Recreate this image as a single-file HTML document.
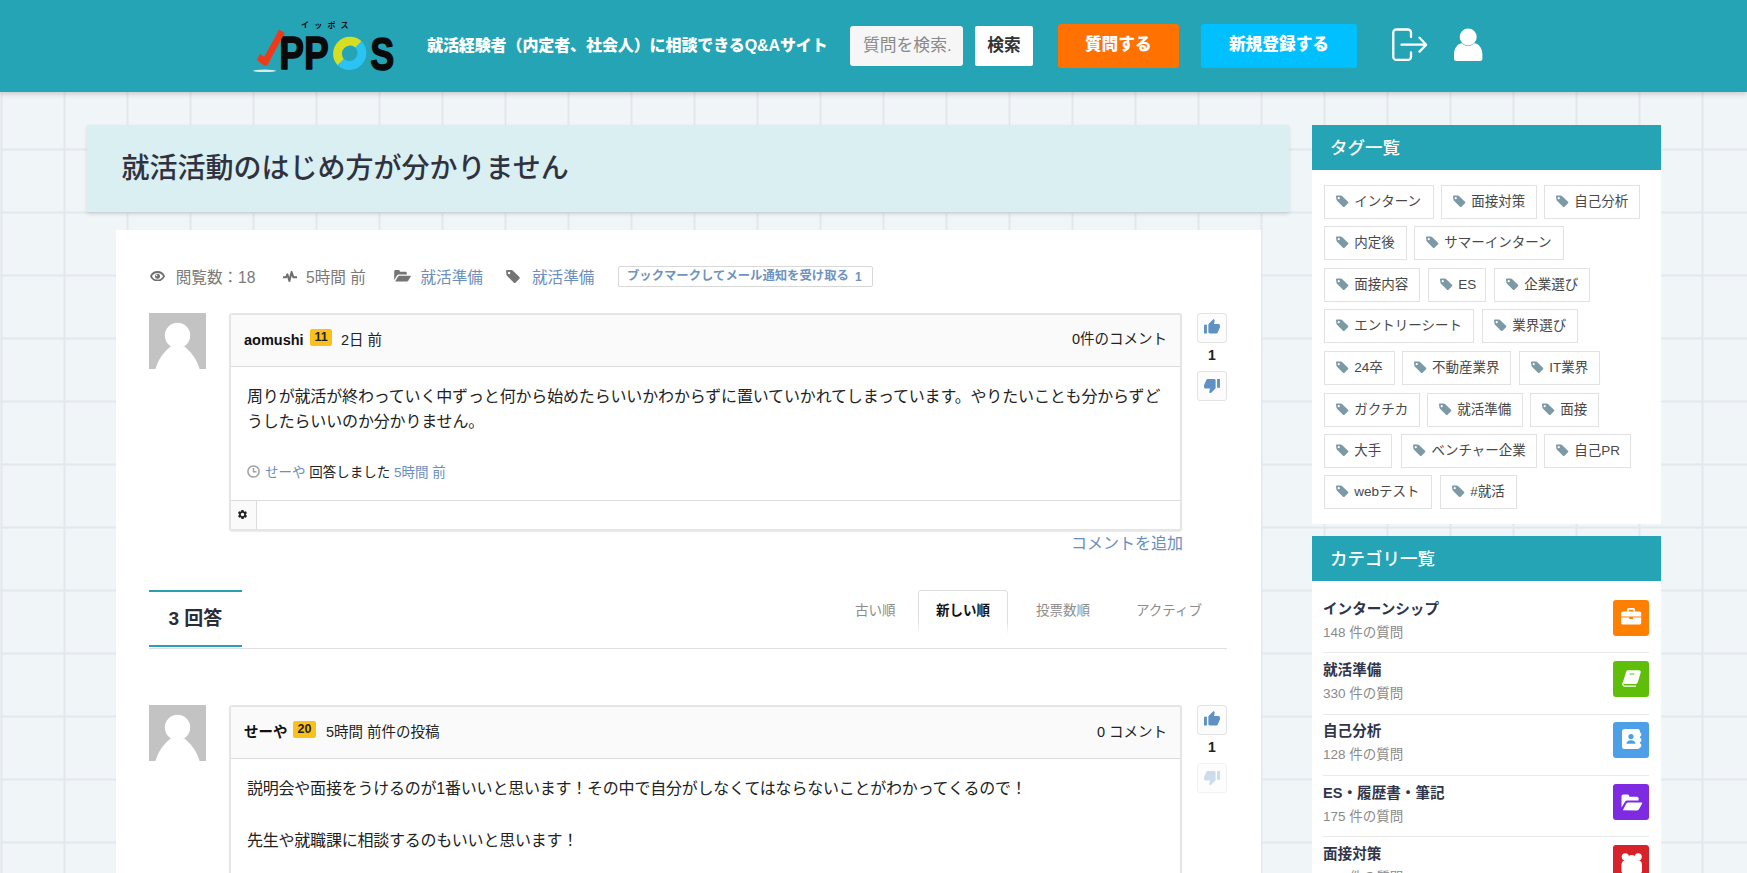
<!DOCTYPE html>
<html lang="ja">
<head>
<meta charset="utf-8">
<title>就活活動のはじめ方が分かりません - IPPOS</title>
<style>
*{box-sizing:border-box;margin:0;padding:0}
html,body{width:1747px;height:873px;overflow:hidden}
body{font-family:"Liberation Sans","Noto Sans CJK JP",sans-serif;color:#222;background-color:#f0f5f8;
 background-image:linear-gradient(90deg,rgba(226,231,236,0) 0,#e3e8ed 1px,#e3e8ed 2px,rgba(226,231,236,0) 3px),linear-gradient(180deg,rgba(226,231,236,0) 0,#e3e8ed 1px,#e3e8ed 2px,rgba(226,231,236,0) 3px);
 background-size:63px 63px;background-position:0 22px;position:relative}
.abs{position:absolute}
a{text-decoration:none;color:inherit}
#hdr{position:absolute;left:0;top:0;width:1747px;height:92px;background:#25a4b5;box-shadow:0 2px 5px rgba(0,0,0,.18)}
.t{position:absolute;white-space:nowrap;line-height:1}
#tagline{left:427px;top:37.5px;font-size:16px;font-weight:900;color:#fff;letter-spacing:-.1px}
#sinput{left:850px;top:26px;width:113px;height:40px;background:#f6f6f6;border-radius:3px;color:#8a8a8a;font-size:16.8px;padding:7.4px 0 0 13px;line-height:1;white-space:nowrap;overflow:hidden}
#sbtn{left:975px;top:26px;width:58px;height:40px;background:#fff;border-radius:2px;color:#333;font-size:16.7px;font-weight:700;text-align:center;line-height:40px}
#ask{left:1058px;top:24px;width:120.5px;height:44px;background:#ff7101;border-radius:3px;color:#fff;font-size:16.7px;font-weight:900;text-align:center;line-height:42.4px}
#reg{left:1201px;top:24px;width:156px;height:44px;background:#00c0ff;border-radius:3px;color:#fff;font-size:16.7px;font-weight:900;text-align:center;line-height:42.4px}
#title{left:87px;top:125px;width:1202px;height:87px;background:#d9eff2;box-shadow:0 2px 4px rgba(0,0,0,.12)}
#title h1{position:absolute;left:34.6px;top:29.8px;font-size:28px;font-weight:500;color:#30333f;line-height:1;white-space:nowrap}
#main{left:116px;top:230px;width:1145px;height:660px;background:#fff}
.meta{font-size:15.6px;color:#7a7a7a}
.lnk{color:#6c8ebc}
.avatar{width:57px;height:56px;background:#c3c3c3;overflow:hidden}
.post{border:2px solid #e5e5e5;border-radius:3px;background:#fff;box-shadow:0 1px 1px rgba(0,0,0,.08)}
.phead{position:absolute;left:0;top:0;right:0;height:52px;background:#fafafa;border-bottom:1px solid #dcdcdc}
.badge{position:absolute;background:#fcc01c;border-radius:2px;color:#222;font-size:12.5px;font-weight:700;text-align:center;line-height:17px;height:17px;width:23px}
.vote{position:absolute;width:30px;height:30px;border:1px solid #e3e3e3;border-radius:3px;background:#fcfcfc}
.sbh{position:absolute;left:1312px;width:349px;height:45px;background:#25a4b5;color:#fff;font-size:17.5px;font-weight:500;line-height:46px;padding-left:18px}
.sbb{position:absolute;left:1312px;width:349px;background:#fff}
.tag{position:absolute;height:34px;border:1px solid #e2e2e2;background:#fff;font-size:13.5px;color:#484848;line-height:31px;white-space:nowrap}
.tag svg{position:absolute;left:11px;top:8.5px}
.tag span{position:absolute;left:29px;top:0}
.cat{position:absolute;left:1323px;width:326px;height:61px}
.cat b{position:absolute;left:0;top:2.1px;font-size:14.6px;line-height:1;color:#30354a;white-space:nowrap}
.cat i{position:absolute;left:0;top:25.5px;font-size:13.5px;line-height:1;color:#8a8a8a;font-style:normal;white-space:nowrap}
.cat .ic{position:absolute;left:290px;top:0;width:36px;height:36px;border-radius:3px}
.cat .ln{position:absolute;left:0;right:0;top:52px;height:1px;background:#e9e9e9}
</style>
</head>
<body>
<div id="hdr">
<!--HICONS-->
 <svg class="abs" style="left:240px;top:10px" width="180" height="80" viewBox="240 10 180 80">
  <text x="301" y="28" font-family="'Liberation Sans','Noto Sans CJK JP',sans-serif" font-size="8" font-weight="700" fill="#111" letter-spacing="5.200">イッポス</text>
  <ellipse cx="264.600" cy="70.800" rx="11.600" ry="1.300" fill="#dfe9eb"/>
  <text x="279.300" y="69.100" font-family="'Liberation Sans',sans-serif" font-size="46.500" font-weight="700" fill="#0a0a0a" stroke="#0a0a0a" stroke-width="1.500" stroke-linejoin="round" textLength="49.500" lengthAdjust="spacingAndGlyphs">PP</text>
  <polygon points="279.200,29.600 284.700,32.900 267.300,65.200 264.600,65.900 256.800,59.900 259.800,54 264.300,56.700" fill="#ef3a1a"/>
  <path d="M358.600 44.400A12.600 12.600 0 0 0 340.800 62.200" fill="none" stroke="#d6de22" stroke-width="8.800"/>
  <path d="M340.800 62.200A12.600 12.600 0 0 0 358.600 44.400" fill="none" stroke="#2bc3f4" stroke-width="8.800"/>
  <text x="370.300" y="69.500" font-family="'Liberation Sans',sans-serif" font-size="47" font-weight="700" fill="#0a0a0a" stroke="#0a0a0a" stroke-width="1.500" stroke-linejoin="round" textLength="24" lengthAdjust="spacingAndGlyphs">S</text>
 </svg>
 <svg class="abs" style="left:1390px;top:26px" width="40" height="38" viewBox="1390 26 40 38"><path d="M1411 37v-4.500a3 3 0 0 0-3-3h-11.700a3 3 0 0 0-3 3v24.400a3 3 0 0 0 3 3H1408a3 3 0 0 0 3-3V52.500M1401.500 44.700H1426M1419.500 37.800l6.700 6.900-6.700 6.900" fill="none" stroke="#fff" stroke-width="2.300" stroke-linecap="round" stroke-linejoin="round"/></svg>
 <svg class="abs" style="left:1452px;top:26px" width="34" height="38" viewBox="1452 26 34 38"><circle cx="1468.200" cy="37" r="8.500" fill="#fff"/><path d="M1454 58.500v-4c0-6.500 4-11.200 8.200-11.200 1.500 1.700 3.600 2.600 6 2.600s4.500-.9 6-2.600c4.200 0 8.200 4.700 8.200 11.200v4a2.500 2.500 0 0 1-2.500 2.500h-23.400a2.500 2.500 0 0 1-2.500-2.500z" fill="#fff"/></svg>
<!--/HICONS-->
 <div class="t" id="tagline">就活経験者（内定者、社会人）に相談できるQ&amp;Aサイト</div>
 <div class="abs" id="sinput"><span style="display:block;width:88.500px;overflow:hidden;line-height:26px">質問を検索...</span></div>
 <div class="abs" id="sbtn">検索</div>
 <div class="abs" id="ask">質問する</div>
 <div class="abs" id="reg">新規登録する</div>
</div>
<div class="abs" id="title"><h1>就活活動のはじめ方が分かりません</h1></div>
<div class="abs" id="main"></div>
<!--MAIN-->
<!-- meta row -->
<svg class="abs" style="left:150px;top:270.500px" width="15" height="10.500" viewBox="0 0 15 10.500"><path d="M7.500 1C4.200 1 1.800 3.300 1 5.250c.8 1.950 3.200 4.250 6.500 4.250s5.700-2.300 6.500-4.250C13.200 3.300 10.800 1 7.500 1z" fill="none" stroke="#6e6e6e" stroke-width="1.900"/><circle cx="7.500" cy="5.250" r="2.500" fill="#6e6e6e"/><circle cx="6.600" cy="4.400" r=".8" fill="#fff"/></svg>
<div class="t meta" style="left:175.700px;top:269.5px">閲覧数：18</div>
<svg class="abs" style="left:283px;top:270.500px" width="14" height="11" viewBox="0 0 14 11"><path d="M0 6.300h3l1.400-3 2 6.700 2.200-9 1.700 5.300H14" fill="none" stroke="#6e6e6e" stroke-width="2" stroke-linejoin="round"/></svg>
<div class="t meta" style="left:306px;top:269.5px">5時間 前</div>
<svg class="abs" style="left:394px;top:270px" width="17" height="12" viewBox="0 0 18 13"><path d="M0 11V1.500C0 .7.700 0 1.500 0h3.200c.8 0 1.500.7 1.500 1.500V2h6c.8 0 1.500.7 1.500 1.500V5H5.200c-1 0-2 .6-2.500 1.500z" fill="#757575"/><path d="M1 12.500l3-5.300c.3-.5.900-.9 1.500-.9H17.400c.5 0 .7.400.5.800l-2.700 4.600c-.3.500-.9.800-1.500.8z" fill="#757575"/></svg>
<div class="t meta lnk" style="left:420.5px;top:269.5px">就活準備</div>
<svg class="abs" style="left:506.300px;top:269.800px" width="14" height="13" viewBox="0 0 15 14"><path d="M0 1.200C0 .5.500 0 1.200 0h4.600c.5 0 1 .2 1.400.6l7.200 7c.5.500.5 1.300 0 1.800l-4.200 4.200c-.5.500-1.300.5-1.800 0L1.200 6.400C.8 6 .5 5.500.5 5zM3.300 2a1.300 1.300 0 100 2.600 1.300 1.300 0 000-2.600z" fill="#757575" fill-rule="evenodd"/></svg>
<div class="t meta lnk" style="left:532px;top:269.5px">就活準備</div>
<div class="abs" style="left:618px;top:266px;width:255px;height:21px;border:1px solid #d8d8d8;border-radius:2px;background:#fff"></div>
<div class="t" style="left:627px;top:270px;font-size:12.35px;font-weight:700;color:#6f92c0">ブックマークしてメール通知を受け取る</div>
<div class="t" style="left:855px;top:271px;font-size:12px;font-weight:700;color:#6f92c0">1</div>

<!-- question -->
<div class="abs avatar" style="left:149px;top:313px"><svg width="57" height="56" viewBox="0 0 57 56"><circle cx="28.500" cy="22.400" r="12.700" fill="#fff"/><path d="M6.400 56C8.500 49 12 41.500 21.200 33.700H35.800C45 41.500 48.500 49 50.600 56z" fill="#fff"/></svg></div>
<div class="abs post" style="left:228.500px;top:313px;width:953.500px;height:217.500px">
 <div class="phead"></div>
 <div class="abs" style="left:0;right:0;top:185px;height:1px;background:#dcdcdc"></div>
 <div class="abs" style="left:0;top:186px;width:26px;height:28px;background:#fafafa;border-right:1px solid #dcdcdc"></div>
</div>
<div class="t" style="left:244px;top:333px;font-size:14.500px;font-weight:700;color:#111">aomushi</div>
<div class="badge" style="left:310px;top:329px;width:22px">11</div>
<div class="t" style="left:341px;top:333px;font-size:14.500px;color:#222">2日 前</div>
<div class="t" style="right:580px;top:332px;font-size:14.500px;color:#222">0件のコメント</div>
<div class="abs" style="left:247px;top:384px;width:930px;font-size:16px;line-height:25.400px;color:#222;letter-spacing:-.16px">周りが就活が終わっていく中ずっと何から始めたらいいかわからずに置いていかれてしまっています。やりたいことも分からずど<br>うしたらいいのか分かりません。</div>
<svg class="abs" style="left:247px;top:465px" width="13" height="13" viewBox="0 0 13 13"><circle cx="6.500" cy="6.500" r="5.600" fill="none" stroke="#a0a0a0" stroke-width="1.500"/><path d="M6.500 3v3.800H9.500" fill="none" stroke="#a0a0a0" stroke-width="1.500"/></svg>
<div class="t" style="left:265px;top:465.5px;font-size:13.500px;color:#222"><span class="lnk">せーや</span> 回答しました <span class="lnk">5時間 前</span></div>
<svg class="abs" style="left:236.500px;top:508.500px" width="11" height="11" viewBox="0 0 24 24"><path fill="#222" d="M19.400 13c0-.3.100-.6.100-1s0-.7-.1-1l2.100-1.600c.2-.2.200-.4.100-.6l-2-3.500c-.1-.2-.4-.3-.6-.2l-2.500 1c-.5-.4-1.100-.7-1.700-1l-.4-2.600c0-.2-.2-.4-.5-.4h-4c-.2 0-.5.200-.5.400l-.4 2.600c-.6.300-1.200.6-1.700 1l-2.500-1c-.2-.1-.5 0-.6.200l-2 3.500c-.1.200-.1.500.1.600L4.600 11c0 .3-.1.600-.1 1s0 .7.100 1l-2.100 1.600c-.2.200-.2.400-.1.600l2 3.500c.1.200.4.300.6.200l2.500-1c.5.400 1.100.7 1.700 1l.4 2.600c0 .2.200.4.500.4h4c.2 0 .5-.2.500-.4l.4-2.600c.6-.3 1.200-.6 1.700-1l2.500 1c.2.100.5 0 .6-.2l2-3.500c.1-.2.100-.5-.1-.6zM12 15.800a3.800 3.800 0 110-7.600 3.800 3.800 0 010 7.600z"/></svg>
<div class="t lnk" style="right:564px;top:536px;font-size:16px">コメントを追加</div>

<!-- votes q -->
<div class="vote" style="left:1197px;top:313px"></div>
<div class="t" style="left:1197px;width:30px;text-align:center;top:348px;font-size:14px;font-weight:700;color:#222">1</div>
<div class="vote" style="left:1197px;top:371px"></div>
<!--ANS-->
<svg class="abs" style="left:1204px;top:319px;opacity:1" width="16" height="14.500" viewBox="1 1 22 20"><path d="M1 21h4V9H1v12zm22-11c0-1.100-.9-2-2-2h-6.310l.950-4.570.030-.320c0-.410-.170-.790-.440-1.060L14.170 1 7.590 7.590C7.220 7.950 7 8.450 7 9v10c0 1.100.9 2 2 2h9c.830 0 1.540-.5 1.840-1.220l3.020-7.050c.090-.230.140-.470.140-.730v-2z" fill="#5f91c5"/></svg>
<svg class="abs" style="left:1204px;top:378.500px;opacity:1" width="16" height="14.500" viewBox="1 3 22 20"><path d="M15 3H6c-.830 0-1.540.5-1.840 1.220l-3.020 7.050c-.090.230-.140.470-.140.730v2c0 1.100.9 2 2 2h6.310l-.950 4.570-.030.320c0 .410.170.790.440 1.060L9.830 23l6.590-6.590c.360-.360.580-.860.580-1.410V5c0-1.100-.9-2-2-2zm4 0v12h4V3h-4z" fill="#5f91c5"/></svg>
<div class="abs" style="left:149px;top:590px;width:93px;height:2px;background:#2b9eb0"></div>
<div class="abs" style="left:149px;top:645px;width:93px;height:2px;background:#2b9eb0"></div>
<div class="abs" style="left:149px;top:648px;width:1078px;height:1px;background:#dedede"></div>
<div class="t" style="left:168.500px;top:609px;font-size:19px;font-weight:700;color:#2a2d35">3 回答</div>
<div class="t" style="left:855px;top:604px;font-size:13.500px;color:#8c8c8c">古い順</div>
<div class="abs" style="left:918px;top:590px;width:90px;height:45px;border:1px solid #dedede;border-bottom:0;border-radius:3px 3px 0 0;background:#fff;-webkit-mask-image:linear-gradient(#000 70%,transparent)"></div>
<div class="t" style="left:936px;top:604px;font-size:13.500px;font-weight:700;color:#111">新しい順</div>
<div class="t" style="left:1036px;top:604px;font-size:13.500px;color:#8c8c8c">投票数順</div>
<div class="t" style="left:1136px;top:604px;font-size:13.500px;color:#8c8c8c">アクティブ</div>
<div class="abs avatar" style="left:149px;top:705px"><svg width="57" height="56" viewBox="0 0 57 56"><circle cx="28.500" cy="22.400" r="12.700" fill="#fff"/><path d="M6.400 56C8.500 49 12 41.500 21.200 33.700H35.800C45 41.500 48.500 49 50.600 56z" fill="#fff"/></svg></div>
<div class="abs post" style="left:228.500px;top:705px;width:953.500px;height:200px"><div class="phead"></div></div>
<div class="t" style="left:244px;top:725px;font-size:14.500px;font-weight:700;color:#111">せーや</div>
<div class="badge" style="left:293px;top:721px">20</div>
<div class="t" style="left:326px;top:725px;font-size:14.500px;color:#222">5時間 前件の投稿</div>
<div class="t" style="right:580px;top:725px;font-size:14.500px;color:#222">0 コメント</div>
<div class="t" style="left:247px;top:780.7px;font-size:16px;color:#222;letter-spacing:-.22px">説明会や面接をうけるのが1番いいと思います！その中で自分がしなくてはならないことがわかってくるので！</div>
<div class="t" style="left:247px;top:832.7px;font-size:16px;color:#222;letter-spacing:-.22px">先生や就職課に相談するのもいいと思います！</div>
<div class="vote" style="left:1197px;top:705px"></div>
<svg class="abs" style="left:1204px;top:711px;opacity:1" width="16" height="14.500" viewBox="1 1 22 20"><path d="M1 21h4V9H1v12zm22-11c0-1.100-.9-2-2-2h-6.310l.950-4.570.030-.320c0-.410-.170-.790-.440-1.060L14.170 1 7.590 7.590C7.220 7.950 7 8.450 7 9v10c0 1.100.9 2 2 2h9c.830 0 1.540-.5 1.840-1.220l3.020-7.050c.090-.230.140-.470.140-.730v-2z" fill="#5f91c5"/></svg>
<div class="t" style="left:1197px;width:30px;text-align:center;top:740px;font-size:14px;font-weight:700;color:#222">1</div>
<div class="vote" style="left:1197px;top:763px;opacity:.45"></div>
<svg class="abs" style="left:1204px;top:770.500px;opacity:0.3" width="16" height="14.500" viewBox="1 3 22 20"><path d="M15 3H6c-.830 0-1.540.5-1.840 1.220l-3.020 7.050c-.090.230-.140.470-.140.730v2c0 1.100.9 2 2 2h6.310l-.950 4.570-.030.320c0 .410.170.790.440 1.060L9.830 23l6.590-6.590c.360-.360.580-.860.580-1.410V5c0-1.100-.9-2-2-2zm4 0v12h4V3h-4z" fill="#5f91c5"/></svg>
<!--/ANS-->
<!--/MAIN-->
<!--SIDEBAR-->
<div class="sbh" style="top:125px">タグ一覧</div>
<div class="sbb" style="top:170px;height:354px"></div>
<a class="tag" style="left:1324.2px;top:185px;width:109.4px"><svg width="12.500" height="12.500" viewBox="0 0 15 14"><path d="M0 1.200C0 .5.500 0 1.200 0h4.600c.5 0 1 .2 1.400.6l7.200 7c.5.500.5 1.300 0 1.800l-4.200 4.200c-.5.500-1.300.5-1.800 0L1.200 6.400C.8 6 .5 5.500.5 5zM3.300 2a1.300 1.300 0 100 2.600 1.300 1.300 0 000-2.600z" fill="#7b9aa6" fill-rule="evenodd"/></svg><span>インターン</span></a>
<a class="tag" style="left:1441.2px;top:185px;width:95.6px"><svg width="12.500" height="12.500" viewBox="0 0 15 14"><path d="M0 1.200C0 .5.500 0 1.200 0h4.600c.5 0 1 .2 1.400.6l7.200 7c.5.500.5 1.300 0 1.800l-4.200 4.200c-.5.500-1.300.5-1.800 0L1.200 6.400C.8 6 .5 5.500.5 5zM3.300 2a1.300 1.300 0 100 2.600 1.300 1.300 0 000-2.600z" fill="#7b9aa6" fill-rule="evenodd"/></svg><span>面接対策</span></a>
<a class="tag" style="left:1544.2px;top:185px;width:95.6px"><svg width="12.500" height="12.500" viewBox="0 0 15 14"><path d="M0 1.200C0 .5.500 0 1.200 0h4.600c.5 0 1 .2 1.400.6l7.200 7c.5.500.5 1.300 0 1.800l-4.200 4.200c-.5.500-1.300.5-1.800 0L1.200 6.400C.8 6 .5 5.500.5 5zM3.300 2a1.300 1.300 0 100 2.600 1.300 1.300 0 000-2.600z" fill="#7b9aa6" fill-rule="evenodd"/></svg><span>自己分析</span></a>
<a class="tag" style="left:1324.2px;top:226px;width:82.5px"><svg width="12.500" height="12.500" viewBox="0 0 15 14"><path d="M0 1.200C0 .5.500 0 1.200 0h4.600c.5 0 1 .2 1.400.6l7.200 7c.5.500.5 1.300 0 1.800l-4.200 4.200c-.5.500-1.300.5-1.800 0L1.200 6.400C.8 6 .5 5.500.5 5zM3.300 2a1.300 1.300 0 100 2.600 1.300 1.300 0 000-2.600z" fill="#7b9aa6" fill-rule="evenodd"/></svg><span>内定後</span></a>
<a class="tag" style="left:1414.3px;top:226px;width:149.7px"><svg width="12.500" height="12.500" viewBox="0 0 15 14"><path d="M0 1.200C0 .5.500 0 1.200 0h4.600c.5 0 1 .2 1.400.6l7.200 7c.5.500.5 1.300 0 1.800l-4.200 4.200c-.5.500-1.300.5-1.800 0L1.200 6.400C.8 6 .5 5.500.5 5zM3.300 2a1.300 1.300 0 100 2.600 1.300 1.300 0 000-2.600z" fill="#7b9aa6" fill-rule="evenodd"/></svg><span>サマーインターン</span></a>
<a class="tag" style="left:1324.2px;top:268px;width:95.4px"><svg width="12.500" height="12.500" viewBox="0 0 15 14"><path d="M0 1.200C0 .5.500 0 1.200 0h4.600c.5 0 1 .2 1.400.6l7.200 7c.5.500.5 1.300 0 1.800l-4.200 4.200c-.5.500-1.300.5-1.800 0L1.200 6.400C.8 6 .5 5.500.5 5zM3.300 2a1.300 1.300 0 100 2.600 1.300 1.300 0 000-2.600z" fill="#7b9aa6" fill-rule="evenodd"/></svg><span>面接内容</span></a>
<a class="tag" style="left:1428.3px;top:268px;width:57.4px"><svg width="12.500" height="12.500" viewBox="0 0 15 14"><path d="M0 1.200C0 .5.500 0 1.200 0h4.600c.5 0 1 .2 1.400.6l7.200 7c.5.500.5 1.300 0 1.800l-4.200 4.200c-.5.500-1.300.5-1.800 0L1.200 6.400C.8 6 .5 5.500.5 5zM3.300 2a1.300 1.300 0 100 2.600 1.300 1.300 0 000-2.600z" fill="#7b9aa6" fill-rule="evenodd"/></svg><span>ES</span></a>
<a class="tag" style="left:1494.2px;top:268px;width:95.6px"><svg width="12.500" height="12.500" viewBox="0 0 15 14"><path d="M0 1.200C0 .5.500 0 1.200 0h4.600c.5 0 1 .2 1.400.6l7.200 7c.5.500.5 1.300 0 1.800l-4.200 4.200c-.5.500-1.300.5-1.800 0L1.200 6.400C.8 6 .5 5.500.5 5zM3.300 2a1.300 1.300 0 100 2.600 1.300 1.300 0 000-2.600z" fill="#7b9aa6" fill-rule="evenodd"/></svg><span>企業選び</span></a>
<a class="tag" style="left:1324.2px;top:309px;width:149.4px"><svg width="12.500" height="12.500" viewBox="0 0 15 14"><path d="M0 1.200C0 .5.500 0 1.200 0h4.600c.5 0 1 .2 1.400.6l7.200 7c.5.500.5 1.300 0 1.800l-4.200 4.200c-.5.500-1.300.5-1.800 0L1.200 6.400C.8 6 .5 5.500.5 5zM3.300 2a1.300 1.300 0 100 2.600 1.300 1.300 0 000-2.600z" fill="#7b9aa6" fill-rule="evenodd"/></svg><span>エントリーシート</span></a>
<a class="tag" style="left:1482.3px;top:309px;width:95.4px"><svg width="12.500" height="12.500" viewBox="0 0 15 14"><path d="M0 1.200C0 .5.500 0 1.200 0h4.600c.5 0 1 .2 1.400.6l7.200 7c.5.500.5 1.300 0 1.800l-4.200 4.200c-.5.500-1.300.5-1.800 0L1.200 6.400C.8 6 .5 5.500.5 5zM3.300 2a1.300 1.300 0 100 2.600 1.300 1.300 0 000-2.600z" fill="#7b9aa6" fill-rule="evenodd"/></svg><span>業界選び</span></a>
<a class="tag" style="left:1324.2px;top:351px;width:70.4px"><svg width="12.500" height="12.500" viewBox="0 0 15 14"><path d="M0 1.200C0 .5.500 0 1.200 0h4.600c.5 0 1 .2 1.400.6l7.200 7c.5.500.5 1.300 0 1.800l-4.200 4.200c-.5.500-1.300.5-1.800 0L1.200 6.400C.8 6 .5 5.500.5 5zM3.300 2a1.300 1.300 0 100 2.600 1.300 1.300 0 000-2.600z" fill="#7b9aa6" fill-rule="evenodd"/></svg><span>24卒</span></a>
<a class="tag" style="left:1402px;top:351px;width:109.0px"><svg width="12.500" height="12.500" viewBox="0 0 15 14"><path d="M0 1.200C0 .5.500 0 1.200 0h4.600c.5 0 1 .2 1.400.6l7.200 7c.5.500.5 1.300 0 1.800l-4.200 4.200c-.5.500-1.300.5-1.800 0L1.200 6.400C.8 6 .5 5.500.5 5zM3.300 2a1.300 1.300 0 100 2.600 1.300 1.300 0 000-2.600z" fill="#7b9aa6" fill-rule="evenodd"/></svg><span>不動産業界</span></a>
<a class="tag" style="left:1519.2px;top:351px;width:80.6px"><svg width="12.500" height="12.500" viewBox="0 0 15 14"><path d="M0 1.200C0 .5.500 0 1.200 0h4.600c.5 0 1 .2 1.400.6l7.200 7c.5.500.5 1.300 0 1.800l-4.200 4.200c-.5.500-1.300.5-1.800 0L1.200 6.400C.8 6 .5 5.500.5 5zM3.300 2a1.300 1.300 0 100 2.600 1.300 1.300 0 000-2.600z" fill="#7b9aa6" fill-rule="evenodd"/></svg><span>IT業界</span></a>
<a class="tag" style="left:1324.2px;top:393px;width:95.4px"><svg width="12.500" height="12.500" viewBox="0 0 15 14"><path d="M0 1.200C0 .5.500 0 1.200 0h4.600c.5 0 1 .2 1.400.6l7.200 7c.5.500.5 1.300 0 1.800l-4.200 4.200c-.5.500-1.300.5-1.800 0L1.200 6.400C.8 6 .5 5.500.5 5zM3.300 2a1.300 1.300 0 100 2.600 1.300 1.300 0 000-2.600z" fill="#7b9aa6" fill-rule="evenodd"/></svg><span>ガクチカ</span></a>
<a class="tag" style="left:1427.2px;top:393px;width:95.4px"><svg width="12.500" height="12.500" viewBox="0 0 15 14"><path d="M0 1.200C0 .5.500 0 1.200 0h4.600c.5 0 1 .2 1.400.6l7.200 7c.5.500.5 1.300 0 1.800l-4.200 4.200c-.5.500-1.300.5-1.800 0L1.200 6.400C.8 6 .5 5.500.5 5zM3.300 2a1.300 1.300 0 100 2.600 1.300 1.300 0 000-2.600z" fill="#7b9aa6" fill-rule="evenodd"/></svg><span>就活準備</span></a>
<a class="tag" style="left:1530.3px;top:393px;width:68.4px"><svg width="12.500" height="12.500" viewBox="0 0 15 14"><path d="M0 1.200C0 .5.500 0 1.200 0h4.600c.5 0 1 .2 1.400.6l7.200 7c.5.500.5 1.300 0 1.800l-4.200 4.200c-.5.500-1.300.5-1.800 0L1.200 6.400C.8 6 .5 5.500.5 5zM3.300 2a1.300 1.300 0 100 2.600 1.300 1.300 0 000-2.600z" fill="#7b9aa6" fill-rule="evenodd"/></svg><span>面接</span></a>
<a class="tag" style="left:1324.2px;top:434px;width:68.3px"><svg width="12.500" height="12.500" viewBox="0 0 15 14"><path d="M0 1.200C0 .5.500 0 1.200 0h4.600c.5 0 1 .2 1.400.6l7.200 7c.5.500.5 1.300 0 1.800l-4.200 4.200c-.5.500-1.300.5-1.800 0L1.200 6.400C.8 6 .5 5.500.5 5zM3.300 2a1.300 1.300 0 100 2.600 1.300 1.300 0 000-2.600z" fill="#7b9aa6" fill-rule="evenodd"/></svg><span>大手</span></a>
<a class="tag" style="left:1401.4px;top:434px;width:135.2px"><svg width="12.500" height="12.500" viewBox="0 0 15 14"><path d="M0 1.200C0 .5.500 0 1.200 0h4.600c.5 0 1 .2 1.400.6l7.200 7c.5.500.5 1.300 0 1.800l-4.200 4.200c-.5.500-1.300.5-1.800 0L1.200 6.400C.8 6 .5 5.500.5 5zM3.300 2a1.300 1.300 0 100 2.600 1.300 1.300 0 000-2.600z" fill="#7b9aa6" fill-rule="evenodd"/></svg><span>ベンチャー企業</span></a>
<a class="tag" style="left:1544.2px;top:434px;width:86.4px"><svg width="12.500" height="12.500" viewBox="0 0 15 14"><path d="M0 1.200C0 .5.500 0 1.200 0h4.600c.5 0 1 .2 1.400.6l7.200 7c.5.500.5 1.300 0 1.800l-4.200 4.200c-.5.500-1.300.5-1.800 0L1.200 6.400C.8 6 .5 5.500.5 5zM3.300 2a1.300 1.300 0 100 2.600 1.300 1.300 0 000-2.600z" fill="#7b9aa6" fill-rule="evenodd"/></svg><span>自己PR</span></a>
<a class="tag" style="left:1324.2px;top:475px;width:107.5px"><svg width="12.500" height="12.500" viewBox="0 0 15 14"><path d="M0 1.200C0 .5.500 0 1.200 0h4.600c.5 0 1 .2 1.400.6l7.200 7c.5.500.5 1.300 0 1.800l-4.200 4.200c-.5.500-1.300.5-1.800 0L1.200 6.400C.8 6 .5 5.500.5 5zM3.300 2a1.300 1.300 0 100 2.600 1.300 1.300 0 000-2.600z" fill="#7b9aa6" fill-rule="evenodd"/></svg><span>webテスト</span></a>
<a class="tag" style="left:1440.2px;top:475px;width:76.4px"><svg width="12.500" height="12.500" viewBox="0 0 15 14"><path d="M0 1.200C0 .5.500 0 1.200 0h4.600c.5 0 1 .2 1.400.6l7.200 7c.5.500.5 1.300 0 1.800l-4.200 4.200c-.5.500-1.300.5-1.800 0L1.200 6.400C.8 6 .5 5.500.5 5zM3.300 2a1.300 1.300 0 100 2.600 1.300 1.300 0 000-2.600z" fill="#7b9aa6" fill-rule="evenodd"/></svg><span>#就活</span></a>
<div class="sbh" style="top:536px">カテゴリ一覧</div>
<div class="sbb" style="top:581px;height:300px"></div>
<div class="cat" style="top:600px"><b>インターンシップ</b><i>148 件の質問</i><div class="ic" style="background:#ff8000"><svg width="36" height="36" viewBox="0 0 36 36"><path d="M14 11.500v-2c0-.9.700-1.600 1.600-1.600h4.800c.9 0 1.600.7 1.600 1.600v2h-1.800V9.700h-4.400v1.800z" fill="#fff"/><path d="M8 13.300c0-1 .8-1.800 1.800-1.800h16.600c1 0 1.800.8 1.800 1.800V16.500H8zM8 17.600h8.300v1.500h3.600v-1.500h8.300v5.200c0 1-.8 1.800-1.800 1.800H9.800c-1 0-1.800-.8-1.800-1.800z" fill="#fff"/></svg></div><div class="ln" style="top:52px"></div></div>
<div class="cat" style="top:661px"><b>就活準備</b><i>330 件の質問</i><div class="ic" style="background:#5fbe0a"><svg width="36" height="36" viewBox="0 0 36 36"><path d="M15 9.300h11c1.300 0 2.100 1.100 1.700 2.300l-2.900 9.600c-.3 1.100-1.400 1.900-2.600 1.900H11.600c-1.200 0-1.900-1-1.600-2.100l3-9.700c.3-1.100 1-2 2-2z" fill="#fff"/><path d="M10 21.700c-.7 1.700.2 3.500 2 3.500h10.500" fill="none" stroke="#fff" stroke-width="1.200" stroke-linecap="round"/><path d="M16.500 13h5" stroke="#5fbe0a" stroke-width="1" fill="none"/></svg></div><div class="ln" style="top:53px"></div></div>
<div class="cat" style="top:722px"><b>自己分析</b><i>128 件の質問</i><div class="ic" style="background:#4d9fe8"><svg width="36" height="36" viewBox="0 0 36 36"><path d="M9 9.500A2.500 2.500 0 0 1 11.500 7h13A2.500 2.500 0 0 1 27 9.500v1.200h1.200v3.600H27v1.900h1.200v3.600H27v1.900h1.200v3.600H27v-.8A2.500 2.500 0 0 1 24.500 27h-13A2.500 2.500 0 0 1 9 24.500z" fill="#fff"/><circle cx="18" cy="14.600" r="2.600" fill="#4d9fe8"/><path d="M13.500 21.800c0-2.300 1.800-3.600 4.500-3.600s4.500 1.300 4.500 3.600z" fill="#4d9fe8"/></svg></div><div class="ln" style="top:53px"></div></div>
<div class="cat" style="top:784px"><b>ES・履歴書・筆記</b><i>175 件の質問</i><div class="ic" style="background:#7d2ae0"><svg width="36" height="36" viewBox="0 0 36 36"><path d="M8.500 23.500V12.300c0-1 .8-1.800 1.800-1.800h4.200c1 0 1.800.8 1.800 1.800v.5h7.500c1 0 1.800.8 1.800 1.800v1.900h-11c-1.200 0-2.300.7-2.800 1.700z" fill="#fff"/><path d="M9.800 26.300l3.500-6.700c.4-.7 1.100-1.100 1.900-1.100h13.300c.6 0 .9.600.6 1.100l-3.100 5.700c-.4.700-1.100 1.100-1.900 1.100z" fill="#fff"/></svg></div><div class="ln" style="top:52px"></div></div>
<div class="cat" style="top:845px"><b>面接対策</b><i>120 件の質問</i><div class="ic" style="background:#d62228"><svg width="36" height="36" viewBox="0 0 36 36"><circle cx="12.300" cy="11.800" r="3.600" fill="#fff"/><circle cx="25.200" cy="11.800" r="3.600" fill="#fff"/><circle cx="18.700" cy="14.500" r="4.600" fill="#fff"/><path d="M8.500 26v-6.500c0-2.500 2-4.500 4.500-4.500h11.500c2.500 0 4.500 2 4.500 4.500V26c0 1.700-1.300 3-3 3h-14.500c-1.700 0-3-1.300-3-3z" fill="#fff"/></svg></div><div class="ln" style="top:52px"></div></div>
<!--/SIDEBAR-->
</body>
</html>
